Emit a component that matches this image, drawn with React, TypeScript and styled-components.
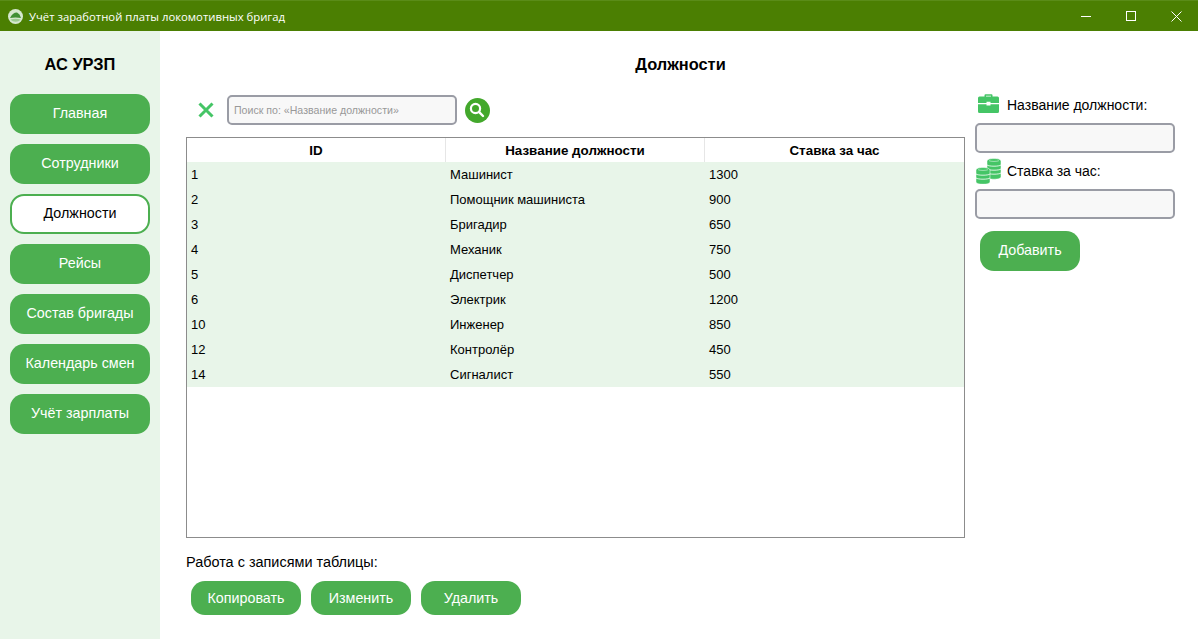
import styled, {createGlobalStyle} from 'styled-components';

const GlobalStyle = createGlobalStyle`
	html, body {
		margin: 0;
		padding: 0;
		background: #ffffff;
		overflow: hidden;
	}
	* {
		box-sizing: border-box;
	}
`;

const Window = styled.div`
	width: 1198px;
	height: 639px;
	display: flex;
	flex-direction: column;
	font-family: "Liberation Sans", Arial, sans-serif;
	color: #000000;
`;

const TitleBar = styled.header`
	height: 31px;
	flex: none;
	display: flex;
	align-items: center;
	justify-content: space-between;
	background-color: #4b7f02;
	border-top: 1px solid #5a8c18;
	padding: 0 16px 0 8px;
	color: #ffffff;
`;

const TitleLeft = styled.div`
	display: flex;
	align-items: center;
	gap: 6px;
`;

const AppName = styled.span`
	font-family: "Open Sans", sans-serif;
	font-size: 11.3px;
`;

const WindowButtons = styled.div`
	display: flex;
	align-items: center;
	gap: 35px;
`;

const Body = styled.div`
	flex: 1;
	display: flex;
	min-height: 0;
`;

const Sidebar = styled.nav`
	width: 160px;
	flex: none;
	background-color: #e8f5e9;
	padding: 24px 10px 0;
	display: flex;
	flex-direction: column;
	gap: 10px;
`;

const Brand = styled.h1`
	margin: 0 0 9px;
	height: 20px;
	line-height: 18px;
	font-size: 16.4px;
	font-weight: bold;
	text-align: center;
`;

const NavButton = styled.button<{$active?: boolean}>`
	height: 40px;
	width: 140px;
	padding: 0 0 2px;
	border-radius: 14px;
	border: ${p => (p.$active ? '2px solid #4caf50' : 'none')};
	background-color: ${p => (p.$active ? '#ffffff' : '#4caf50')};
	color: ${p => (p.$active ? '#000000' : '#ffffff')};
	font-family: inherit;
	font-size: 14.3px;
`;

const Content = styled.main`
	flex: 1;
	padding: 24px 23px 0 26px;
	display: flex;
	flex-direction: column;
`;

const PageTitle = styled.h2`
	margin: 0;
	height: 20px;
	line-height: 18px;
	font-size: 16.4px;
	font-weight: bold;
	text-align: center;
`;

const Columns = styled.div`
	display: flex;
	gap: 10px;
	margin-top: 20px;
`;

const TableColumn = styled.section`
	width: 779px;
	flex: none;
`;

const SearchRow = styled.div`
	display: flex;
	align-items: center;
	height: 30px;
	padding-left: 12px;
`;

const ClearButton = styled.div`
	width: 29px;
	display: flex;
	align-items: center;
`;

const TextBox = styled.div<{$search?: boolean}>`
	height: 30px;
	flex: none;
	border: 2px solid #9a9ca5;
	border-radius: 5px;
	background-color: #f8f8f8;
	width: ${p => (p.$search ? '230px' : '200px')};
	display: flex;
	align-items: center;
	padding-left: 5px;
	font-size: 10.6px;
	color: #999999;
`;

const SearchButton = styled.div`
	width: 25px;
	height: 25px;
	margin-left: 8px;
	border-radius: 50%;
	background-color: #43a82c;
	display: flex;
	align-items: center;
	justify-content: center;
`;

const TableFrame = styled.div`
	margin-top: 12px;
	height: 401px;
	border: 1px solid #8c8c8c;
`;

const Table = styled.table`
	width: 100%;
	table-layout: fixed;
	border-collapse: separate;
	border-spacing: 0;
	font-size: 13px;

	th {
		height: 24px;
		padding: 0;
		font-size: 13.4px;
		font-weight: bold;
		text-align: center;
		border-right: 1px solid #e6e6e6;
	}

	th:last-child {
		border-right: none;
	}

	td {
		height: 25px;
		padding: 0 0 0 4px;
		background-color: #e8f5e9;
	}
`;

const ActionsLabel = styled.div`
	margin-top: 15px;
	height: 18px;
	line-height: 18px;
	font-size: 14.45px;
`;

const Actions = styled.div`
	display: flex;
	gap: 10px;
	margin-top: 10px;
	padding-left: 5px;
`;

const ActionButton = styled.button<{$wide?: boolean}>`
	height: 34px;
	width: ${p => (p.$wide ? '110px' : '100px')};
	padding: 0;
	border: none;
	border-radius: 14px;
	background-color: #4caf50;
	color: #ffffff;
	font-family: inherit;
	font-size: 14.3px;
`;

const FormColumn = styled.aside`
	width: 200px;
	flex: none;
	display: flex;
	flex-direction: column;
`;

const FieldLabel = styled.label<{$coins?: boolean}>`
	display: flex;
	align-items: center;
	gap: ${p => (p.$coins ? '6px' : '8px')};
	height: ${p => (p.$coins ? '32px' : '24px')};
	font-size: 14px;
	padding-left: ${p => (p.$coins ? '0' : '3px')};
	margin: ${p => (p.$coins ? '2px 0 2px' : '-2px 0 6px')};
`;

const AddButton = styled.button`
	height: 40px;
	width: 100px;
	margin: 12px 0 0 5px;
	padding: 0 0 2px;
	border: none;
	border-radius: 14px;
	background-color: #4caf50;
	color: #ffffff;
	font-family: inherit;
	font-size: 14.3px;
`;

const navItems = ['Главная', 'Сотрудники', 'Должности', 'Рейсы', 'Состав бригады', 'Календарь смен', 'Учёт зарплаты'];

const rows = [
	[1, 'Машинист', 1300],
	[2, 'Помощник машиниста', 900],
	[3, 'Бригадир', 650],
	[4, 'Механик', 750],
	[5, 'Диспетчер', 500],
	[6, 'Электрик', 1200],
	[10, 'Инженер', 850],
	[12, 'Контролёр', 450],
	[14, 'Сигналист', 550],
];

function AppLogo() {
	return (
		<svg width="15" height="15" viewBox="0 0 15 15">
			<circle cx="7.5" cy="7.5" r="7.5" fill="#d5e8cf" />
			<path d="M2 9 C3.5 5.5 6 3.5 9 3.5 L11.5 5.5 L13 9 C10 8.200 5 8.200 2 9Z" fill="#3f8f35" />
			<path d="M2.500 10.500 C6 9.500 9.500 9.500 12.500 10.500 C10.500 13.500 5 13.500 2.500 10.500Z" fill="#9ccb92" />
		</svg>
	);
}

function BriefcaseIcon() {
	return (
		<svg width="21" height="22" viewBox="0 0 21 22">
			<path d="M6.500 3 V1.300 Q6.500 0.300 7.500 0.300 H13.500 Q14.500 0.300 14.500 1.300 V3 H13 V1.800 H8 V3Z" fill="#45c566" />
			<path d="M0 4 Q0 2.500 1.500 2.500 H19.500 Q21 2.500 21 4 V9 H12.500 V7.800 H8.500 V9 H0Z" fill="#45c566" />
			<path d="M0 10.200 H8.500 V11.500 H12.500 V10.200 H21 V17.500 Q21 19 19.500 19 H1.500 Q0 19 0 17.500Z" fill="#45c566" />
			<rect x="9.500" y="8.700" width="2" height="2" fill="#ffffff" />
		</svg>
	);
}

function CoinStack({x, y, coins}: {x: number; y: number; coins: number}) {
	const bottom = 2.5 + coins * 4;
	const seams = Array.from({length: coins - 1}, (_, i) => 2.5 + (i + 1) * 4);
	return (
		<g transform={`translate(${x} ${y})`}>
			<path
				d={`M0 2.500 C0 -0.800 14 -0.800 14 2.500 V${bottom} C14 ${bottom + 3} 0 ${bottom + 3} 0 ${bottom}Z`}
				fill="#45c566"
				stroke="#ffffff"
				strokeWidth="0.500"
			/>
			<path d="M2 2.200 C4 3.200 10 3.200 12 2.200" fill="none" stroke="#b5eac3" strokeWidth="0.800" />
			{seams.map(s => (
				<path key={s} d={`M0 ${s} C2 ${s + 1.600} 12 ${s + 1.600} 14 ${s}`} fill="none" stroke="#ffffff" strokeWidth="0.800" />
			))}
		</g>
	);
}

function CoinsIcon() {
	return (
		<svg width="26" height="26" viewBox="0 0 26 26">
			<CoinStack x={12} y={0.500} coins={4} />
			<CoinStack x={1} y={9.500} coins={3} />
		</svg>
	);
}

export default function App() {
	return (
		<Window>
			<GlobalStyle />
			<TitleBar>
				<TitleLeft>
					<AppLogo />
					<AppName>Учёт заработной платы локомотивных бригад</AppName>
				</TitleLeft>
				<WindowButtons>
					<svg width="10" height="10" viewBox="0 0 10 10">
						<path d="M0 5.500 H10" stroke="#ffffff" strokeWidth="1" />
					</svg>
					<svg width="10" height="10" viewBox="0 0 10 10">
						<rect x="0.500" y="0.500" width="9" height="9" fill="none" stroke="#ffffff" strokeWidth="1" />
					</svg>
					<svg width="11" height="11" viewBox="0 0 11 11">
						<path d="M0.500 0.500 L10.500 10.500 M10.500 0.500 L0.500 10.500" stroke="#ffffff" strokeWidth="1" />
					</svg>
				</WindowButtons>
			</TitleBar>

			<Body>
				<Sidebar>
					<Brand>АС УРЗП</Brand>
					{navItems.map(item => (
						<NavButton key={item} $active={item === 'Должности'}>
							{item}
						</NavButton>
					))}
				</Sidebar>

				<Content>
					<PageTitle>Должности</PageTitle>
					<Columns>
						<TableColumn>
							<SearchRow>
								<ClearButton>
									<svg width="16" height="16" viewBox="0 0 16 16">
										<path d="M1.500 1.500 L14.500 14.500 M14.500 1.500 L1.500 14.500" stroke="#45c566" strokeWidth="3" />
									</svg>
								</ClearButton>
								<TextBox $search>Поиск по: «Название должности»</TextBox>
								<SearchButton>
									<svg width="17" height="17" viewBox="0 0 17 17">
										<circle cx="6.500" cy="6.500" r="4.600" fill="none" stroke="#ffffff" strokeWidth="2.200" />
										<path d="M10.200 10.200 L14 14" stroke="#ffffff" strokeWidth="2.400" strokeLinecap="round" />
									</svg>
								</SearchButton>
							</SearchRow>

							<TableFrame>
								<Table>
									<thead>
										<tr>
											<th>ID</th>
											<th>Название должности</th>
											<th>Ставка за час</th>
										</tr>
									</thead>
									<tbody>
										{rows.map(row => (
											<tr key={row[0]}>
												<td>{row[0]}</td>
												<td>{row[1]}</td>
												<td>{row[2]}</td>
											</tr>
										))}
									</tbody>
								</Table>
							</TableFrame>

							<ActionsLabel>Работа с записями таблицы:</ActionsLabel>
							<Actions>
								<ActionButton $wide>Копировать</ActionButton>
								<ActionButton>Изменить</ActionButton>
								<ActionButton>Удалить</ActionButton>
							</Actions>
						</TableColumn>

						<FormColumn>
							<FieldLabel>
								<BriefcaseIcon />
								Название должности:
							</FieldLabel>
							<TextBox />
							<FieldLabel $coins>
								<CoinsIcon />
								Ставка за час:
							</FieldLabel>
							<TextBox />
							<AddButton>Добавить</AddButton>
						</FormColumn>
					</Columns>
				</Content>
			</Body>
		</Window>
	);
}
